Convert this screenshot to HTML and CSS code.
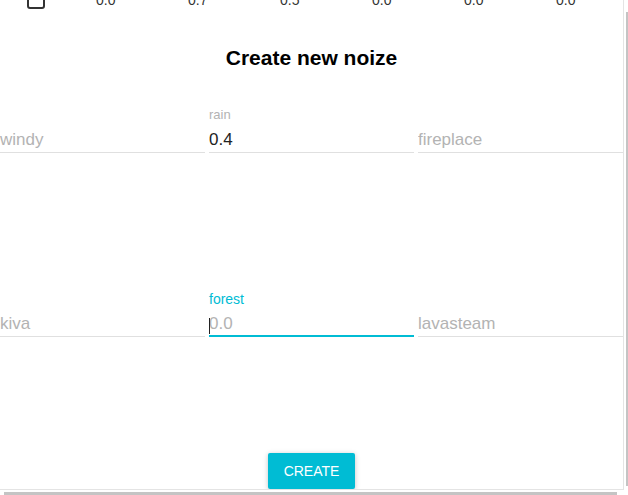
FILE: index.html
```html
<!DOCTYPE html>
<html lang="en">
<head>
  <meta charset="UTF-8" />
  <meta name="viewport" content="width=device-width, initial-scale=1.0" />
  <title>Noize</title>
  <link rel="stylesheet" href="styles.css">
</head>
<body>
  <div class="frame">
    <div class="dialog">
      <div class="saved-row">
        <span class="checkbox"></span>
        <span class="val">0.0</span>
        <span class="val">0.7</span>
        <span class="val">0.5</span>
        <span class="val">0.0</span>
        <span class="val">0.0</span>
        <span class="val">0.0</span>
      </div>

      <h2 class="titel">Create new noize</h2>

      <div class="felder">
        <label class="feld">
          <span class="label"></span>
          <input class="eingabe" placeholder="windy">
        </label>
        <label class="feld">
          <span class="label oben">rain</span>
          <input class="eingabe" value="0.4">
        </label>
        <label class="feld">
          <span class="label"></span>
          <input class="eingabe" placeholder="fireplace">
        </label>

        <label class="feld">
          <span class="label"></span>
          <input class="eingabe" placeholder="kiva">
        </label>
        <label class="feld aktiv">
          <span class="label oben">forest</span>
          <span class="eingabe-wrap">
            <input class="eingabe" placeholder="0.0">
            <span class="caret"></span>
          </span>
        </label>
        <label class="feld">
          <span class="label"></span>
          <input class="eingabe" placeholder="lavasteam">
        </label>
      </div>

      <div class="aktionen">
        <button class="create">Create</button>
      </div>
    </div>
    <div class="vscroll"><div class="thumb"></div></div>
    <div class="hscroll"><div class="thumb-h"></div></div>
  </div>
</body>
</html>
```

FILE: styles.css
```css
body {
  margin: 0;
  font-family: "Liberation Sans", Arial, sans-serif;
  background: #fff;
  overflow: hidden;
  width: 628px;
  height: 495px;
}

.frame {
  display: grid;
  grid-template-columns: 624px 4px;
  grid-template-rows: 490px 5px;
}

.dialog {
  box-sizing: border-box;
  width: 624px;
  height: 490px;
  border-right: 1px solid #e4e4e4;
  border-bottom: 1px solid #e4e4e4;
  overflow: hidden;
  background: white;
}

.saved-row {
  display: grid;
  grid-template-columns: 96px repeat(6, 92px);
  align-items: end;
  height: 24px;
  margin-top: -14px;
}

.checkbox {
  box-sizing: border-box;
  width: 18px;
  height: 18px;
  margin: 0 0 1px 27px;
  border: 2px solid #333;
  border-radius: 3px;
}

.val {
  font-size: 14px;
  line-height: 14px;
  color: #333;
  margin-bottom: 3px;
}

.titel {
  margin: 36px 0 0 0;
  font-size: 21px;
  line-height: 24px;
  font-weight: bold;
  color: #000;
  text-align: center;
}

.felder {
  display: grid;
  grid-template-columns: repeat(3, 205px);
  column-gap: 4px;
  row-gap: 138px;
  margin-top: 37px;
}

.feld {
  display: flex;
  flex-direction: column;
}

.label {
  display: block;
  height: 16px;
  font-size: 13px;
  line-height: 16px;
  color: #b3b3b3;
  margin-bottom: 5px;
}

.aktiv .label {
  color: #00bcd4;
  font-size: 14px;
}

.eingabe {
  box-sizing: border-box;
  width: 100%;
  height: 25px;
  padding: 0 0 1px 0;
  margin: 0;
  border: none;
  border-bottom: 1px solid #e0e0e0;
  outline: none;
  font-family: inherit;
  font-size: 17px;
  line-height: 24px;
  color: #222;
  background: transparent;
}

.eingabe::placeholder {
  color: #b3b3b3;
}

.eingabe-wrap {
  position: relative;
  display: block;
}

.aktiv .eingabe {
  border-bottom: 2px solid #00bcd4;
  padding-bottom: 0;
}

.caret {
  position: absolute;
  left: 0;
  top: 6px;
  width: 1px;
  height: 16px;
  background: #222;
}

.aktionen {
  display: flex;
  justify-content: center;
  margin-top: 116px;
}

.create {
  height: 36px;
  padding: 0 16px;
  border: none;
  border-radius: 2px;
  background: #00bcd4;
  color: white;
  font-family: inherit;
  font-size: 14px;
  text-transform: uppercase;
  box-shadow: 0 1px 6px rgba(0,0,0,0.12), 0 1px 4px rgba(0,0,0,0.12);
  cursor: pointer;
}

.vscroll {
  padding-top: 12px;
}

.thumb {
  width: 2px;
  height: 474px;
  margin-left: 2px;
  background: #c4c4c4;
}

.hscroll {
  grid-column: 1 / 3;
  padding-top: 2px;
}

.thumb-h {
  width: 613px;
  height: 3px;
  margin-left: 4px;
  background: #c4c4c4;
}
```
